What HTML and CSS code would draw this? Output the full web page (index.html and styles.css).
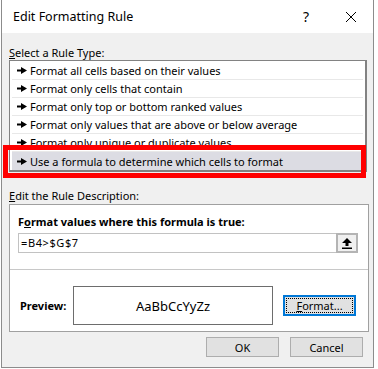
FILE: index.html
```html
<!DOCTYPE html>
<html lang="en">
<head>
    <meta charset="UTF-8">
    <title>Edit Formatting Rule</title>
    <link rel="stylesheet" href="styles.css">
</head>
<body>
<div class="dialog">
    <div class="titlebar">
        <span class="title">Edit Formatting Rule</span>
        <span class="help">?</span>
        <svg class="close" width="12" height="12" viewBox="0 0 12 12">
            <path d="M1 1 L11 11 M11 1 L1 11" stroke="#000" stroke-width="1" fill="none"/>
        </svg>
    </div>

    <div class="body">
        <div class="label"><u>S</u>elect a Rule Type:</div>
        <div class="rule-list">
            <div class="rule"><svg class="pointer" width="10" height="7" viewBox="0 0 10 7"><path d="M0 2.5 H5 V4.5 H0 Z M4 0 L10 3.5 L4 7 Z" fill="#000"/></svg>Format all cells based on their values</div>
            <div class="rule"><svg class="pointer" width="10" height="7" viewBox="0 0 10 7"><path d="M0 2.5 H5 V4.5 H0 Z M4 0 L10 3.5 L4 7 Z" fill="#000"/></svg>Format only cells that contain</div>
            <div class="rule"><svg class="pointer" width="10" height="7" viewBox="0 0 10 7"><path d="M0 2.5 H5 V4.5 H0 Z M4 0 L10 3.5 L4 7 Z" fill="#000"/></svg>Format only top or bottom ranked values</div>
            <div class="rule"><svg class="pointer" width="10" height="7" viewBox="0 0 10 7"><path d="M0 2.5 H5 V4.5 H0 Z M4 0 L10 3.5 L4 7 Z" fill="#000"/></svg>Format only values that are above or below average</div>
            <div class="rule"><svg class="pointer" width="10" height="7" viewBox="0 0 10 7"><path d="M0 2.5 H5 V4.5 H0 Z M4 0 L10 3.5 L4 7 Z" fill="#000"/></svg>Format only unique or duplicate values</div>
            <div class="rule selected"><svg class="pointer" width="10" height="7" viewBox="0 0 10 7"><path d="M0 2.5 H5 V4.5 H0 Z M4 0 L10 3.5 L4 7 Z" fill="#000"/></svg>Use a formula to determine which cells to format</div>
        </div>

        <div class="label desc-label"><u>E</u>dit the Rule Description:</div>
        <div class="desc-box">
            <div class="desc-top">
                <div class="bold-label">F<u>o</u>rmat values where this formula is true:</div>
                <div class="formula">
                    <div class="formula-text">=B4&gt;$G$7</div>
                    <div class="collapse-btn">
                        <svg width="10" height="11" viewBox="0 0 10 11">
                            <path d="M5 0 L10 5 H6.5 V8 H3.5 V5 H0 Z M0 9.5 H10 V11 H0 Z" fill="#000"/>
                        </svg>
                    </div>
                </div>
            </div>
            <div class="preview-row">
                <span class="bold-label preview-label">Preview:</span>
                <div class="preview-box">AaBbCcYyZz</div>
                <button class="btn format-btn"><span class="focus"><u>F</u>ormat...</span></button>
            </div>
        </div>

        <div class="actions">
            <button class="btn">OK</button>
            <button class="btn">Cancel</button>
        </div>
    </div>

    <div class="highlight"></div>
</div>
</body>
</html>
```

FILE: styles.css
```css
* {
    margin: 0;
    padding: 0;
    box-sizing: border-box;
}

body {
    background: #fff;
    font-family: "Noto Sans", "Open Sans", sans-serif;
    font-size: 11px;
    color: #000;
}

.dialog {
    position: relative;
    margin-left: 1px;
    width: 373px;
    height: 368px;
    border-left: 1px solid #8c8c8c;
    border-right: 1px solid #8c8c8c;
    border-bottom: 1px solid #8c8c8c;
    background: #f0f0f0;
}

.titlebar {
    height: 33px;
    background: #fff;
    display: flex;
    align-items: center;
    padding-left: 11px;
}

.title {
    font-size: 12.5px;
    flex: 1;
}

.help {
    font-size: 14px;
    margin-right: 36px;
}

.close {
    margin-right: 16px;
}

.body {
    padding: 0 0 0 7px;
}

.label {
    padding-top: 12px;
    line-height: 15px;
}

.rule-list {
    background: #fff;
    border: 1px solid #828282;
    border-right-width: 2px;
    border-bottom-width: 2px;
    padding: 1px 2px 0;
    width: 358px;
}

.rule {
    display: flex;
    align-items: center;
    height: 18px;
    padding-left: 5px;
    border-bottom: 1px solid #e8e8e8;
    white-space: nowrap;
}

.rule:last-child {
    border-bottom: none;
}

.pointer {
    margin-right: 3px;
}

.rule.selected {
    background: #dcdce3;
}

.desc-label {
    padding-top: 16px;
}

.desc-box {
    margin-top: 1px;
    background: #fff;
    border: 1px solid #a0a0a0;
    width: 360px;
}

.desc-top {
    padding: 9px 10px 16px 8px;
    border-bottom: 1px solid #c8c8c8;
}

.bold-label {
    font-weight: bold;
    line-height: 15px;
}

.formula {
    display: flex;
    margin-top: 4px;
    height: 20px;
}

.formula-text {
    flex: 1;
    border: 1px solid #c2c2c2;
    border-right: none;
    padding-left: 2px;
    line-height: 18px;
    letter-spacing: 0.6px;
}

.collapse-btn {
    width: 22px;
    border: 2px solid #b4b4b4;
    background: #f0f0f0;
    display: flex;
    align-items: center;
    justify-content: center;
}

.preview-row {
    display: flex;
    align-items: center;
    padding: 16px 0 6px 10px;
}

.preview-label {
    width: 53px;
}

.preview-box {
    width: 200px;
    height: 39px;
    border: 1px solid #6d6d6d;
    display: flex;
    align-items: center;
    justify-content: center;
    font-size: 13px;
}

.btn {
    font-family: inherit;
    font-size: 11px;
    color: #000;
    background: #e1e1e1;
    border: 1px solid #adadad;
    width: 73px;
    height: 20px;
}

.format-btn {
    margin-left: 10px;
    height: 21px;
    border: 2px solid #0078d7;
    padding: 1px;
}

.format-btn .focus {
    display: block;
    height: 100%;
    border: 1px dotted #000;
    line-height: 13px;
}

.actions {
    display: flex;
    justify-content: flex-end;
    gap: 11px;
    padding-top: 5px;
    padding-right: 10px;
}

.highlight {
    position: absolute;
    left: 1px;
    top: 145px;
    width: 363px;
    height: 33px;
    border: 5px solid #ff0000;
}
```
